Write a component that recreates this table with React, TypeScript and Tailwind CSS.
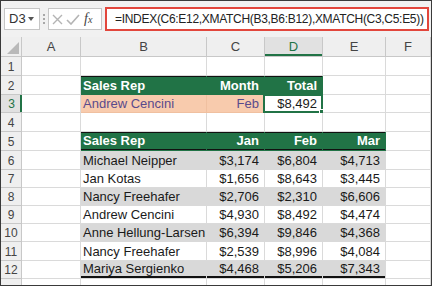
import React from "react";

type Kind = "plain" | "hdr" | "peach" | "gray" | "white" | "active";
type CellDef = {
  t?: string;
  k?: Kind;
  a?: "l" | "r";
  line?: "top" | "both" | "thick" | "none";
};

const kindClass: Record<Kind, string> = {
  plain: "bg-white border-[#dadada] text-[#1a1a1a]",
  hdr: "bg-[#217346] border-[#217346] text-white font-bold",
  peach: "bg-[#f8cbad] border-[#f0c0a0] text-[#5a4a8c]",
  gray: "bg-[#d9d9d9] border-[#d9d9d9] text-[#1a1a1a]",
  white: "bg-white border-[#dadada] text-[#1a1a1a]",
  active: "bg-white border-[#dadada] text-[#1a1a1a]",
};

const lineClass = {
  none: "pt-[1px]",
  top: "pt-[1px] shadow-[inset_0_1px_0_#111]",
  both: "shadow-[inset_0_1px_0_#111,inset_0_-1px_0_#111]",
  thick: "pb-[2px] shadow-[inset_0_-2px_0_#111]",
};

function Cell({ c }: { c: CellDef }) {
  const k = c.k ?? "plain";
  const align = c.a === "r" ? "justify-end pr-[5px]" : "justify-start pl-[2px]";
  return (
    <div
      className={`relative flex items-center whitespace-nowrap border-r border-b ${kindClass[k]} ${align} ${lineClass[c.line ?? "none"]}`}
    >
      {c.t}
      {k === "active" && (
        <div className="pointer-events-none absolute -left-[2px] -top-[1px] -right-[1px] -bottom-[1px] border-2 border-[#217346]">
          <div className="absolute -right-[4px] -bottom-[4px] h-[6px] w-[6px] border border-white bg-[#217346]" />
        </div>
      )}
    </div>
  );
}

const E: CellDef = {};

const rows: { n: number; sel?: boolean; cells: CellDef[] }[] = [
  { n: 1, cells: [E, E, E, E, E, E] },
  {
    n: 2,
    cells: [
      E,
      { t: "Sales Rep", k: "hdr", line: "top" },
      { t: "Month", k: "hdr", a: "r", line: "top" },
      { t: "Total", k: "hdr", a: "r", line: "top" },
      E,
      E,
    ],
  },
  {
    n: 3,
    sel: true,
    cells: [
      E,
      { t: "Andrew Cencini", k: "peach" },
      { t: "Feb", k: "peach", a: "r" },
      { t: "$8,492", k: "active", a: "r" },
      E,
      E,
    ],
  },
  { n: 4, cells: [E, E, E, E, E, E] },
  {
    n: 5,
    cells: [
      E,
      { t: "Sales Rep", k: "hdr", line: "both" },
      { t: "Jan", k: "hdr", a: "r", line: "both" },
      { t: "Feb", k: "hdr", a: "r", line: "both" },
      { t: "Mar", k: "hdr", a: "r", line: "both" },
      E,
    ],
  },
];

const data: [string, string, string, string][] = [
  ["Michael Neipper", "$3,174", "$6,804", "$4,713"],
  ["Jan Kotas", "$1,656", "$8,643", "$3,445"],
  ["Nancy Freehafer", "$2,706", "$2,310", "$6,606"],
  ["Andrew Cencini", "$4,930", "$8,492", "$4,474"],
  ["Anne Hellung-Larsen", "$6,394", "$9,846", "$4,368"],
  ["Nancy Freehafer", "$2,539", "$8,996", "$4,084"],
  ["Mariya Sergienko", "$4,468", "$5,206", "$7,343"],
];

data.forEach((d, i) => {
  const k: Kind = i % 2 === 0 ? "gray" : "white";
  const line = i === data.length - 1 ? "thick" : "none";
  rows.push({
    n: 6 + i,
    cells: [
      E,
      { t: d[0], k, line },
      { t: d[1], k, a: "r", line },
      { t: d[2], k, a: "r", line },
      { t: d[3], k, a: "r", line },
      E,
    ],
  });
});

const cols = ["A", "B", "C", "D", "E", "F"];

export default function App() {
  return (
    <div
      className="h-[286px] w-[432px] overflow-hidden border border-[#3a3a3a] bg-white text-[13px] text-[#1a1a1a]"
      style={{ fontFamily: '"Liberation Sans", Arial, sans-serif' }}
    >
      {/* formula bar */}
      <div className="flex h-[36px] items-center bg-[#f1f1f1] pl-[3px] pr-[2px]">
        <div className="flex h-[22px] w-[36px] items-center justify-between border border-[#c6c6c6] bg-white pl-[4px] pr-[5px] text-[13px] text-[#333]">
          <span>D3</span>
          <svg width="6" height="4" viewBox="0 0 6 4">
            <path d="M0 0 H6 L3 4 Z" fill="#555" />
          </svg>
        </div>
        <div className="flex w-[8px] flex-col items-center gap-[2px]">
          <div className="h-[2px] w-[2px] bg-[#a8a8a8]" />
          <div className="h-[2px] w-[2px] bg-[#a8a8a8]" />
          <div className="h-[2px] w-[2px] bg-[#a8a8a8]" />
        </div>
        <div className="flex h-[22px] w-[54px] items-center border border-[#c6c6c6] bg-white pl-[3px]">
          <svg width="11" height="11" viewBox="0 0 11 11" className="mr-[3px]">
            <path d="M1 1 L10 10 M10 1 L1 10" stroke="#b4b4b4" strokeWidth="1.4" fill="none" />
          </svg>
          <svg width="14" height="11" viewBox="0 0 14 11" className="mr-[4px]">
            <path d="M1 6 L5 10 L13 1" stroke="#b4b4b4" strokeWidth="1.6" fill="none" />
          </svg>
          <span
            className="italic text-[14px] leading-none text-[#444]"
            style={{ fontFamily: '"Liberation Serif", serif' }}
          >
            f<span className="text-[10px]">x</span>
          </span>
        </div>
        <div className="ml-[3px] flex h-[24px] flex-1 items-center border-2 border-[#e2463c] bg-white pl-[8px] text-[12px] tracking-[-0.3px] text-[#222]">
          =INDEX(C6:E12,XMATCH(B3,B6:B12),XMATCH(C3,C5:E5))
        </div>
      </div>

      {/* sheet grid */}
      <div className="grid h-[248px] grid-cols-[21px_59px_126px_58px_58px_63px_1fr] grid-rows-[20px_19px_19px_18px_19px_19px_19px_18px_18px_18px_18px_19px_18px_1fr]">
        {/* column header row */}
        <div className="relative border-r border-b border-[#c8c8c8] bg-[#efefef]">
          <svg width="12" height="12" viewBox="0 0 12 12" className="absolute right-[2px] bottom-[2px]">
            <path d="M12 0 V12 H0 Z" fill="#b9b9b9" />
          </svg>
        </div>
        {cols.map((c) =>
          c === "D" ? (
            <div
              key={c}
              className="flex items-center justify-center border-r border-b border-[#c8c8c8] bg-[#e1e1e1] text-[13px] text-[#217346] shadow-[inset_0_-2px_0_#217346]"
            >
              {c}
            </div>
          ) : (
            <div
              key={c}
              className="flex items-center justify-center border-r border-b border-[#c8c8c8] bg-[#efefef] text-[13px] text-[#444]"
            >
              {c}
            </div>
          )
        )}

        {rows.map((r) => (
          <React.Fragment key={r.n}>
            {r.sel ? (
              <div className="flex items-center justify-center border-b border-[#c8c8c8] bg-[#e1e1e1] pt-[1px] text-[12px] text-[#217346] shadow-[inset_-2px_0_0_#217346]">
                {r.n}
              </div>
            ) : (
              <div className="flex items-center justify-center border-r border-b border-[#c8c8c8] bg-[#efefef] pt-[1px] text-[12px] text-[#444]">
                {r.n}
              </div>
            )}
            {r.cells.map((c, i) => (
              <Cell key={i} c={c} />
            ))}
          </React.Fragment>
        ))}

        {/* partial row 13 */}
        <div className="border-r border-[#c8c8c8] bg-[#efefef]" />
        {cols.map((c) => (
          <div key={c} className="border-r border-[#dadada] bg-white" />
        ))}
      </div>
    </div>
  );
}
